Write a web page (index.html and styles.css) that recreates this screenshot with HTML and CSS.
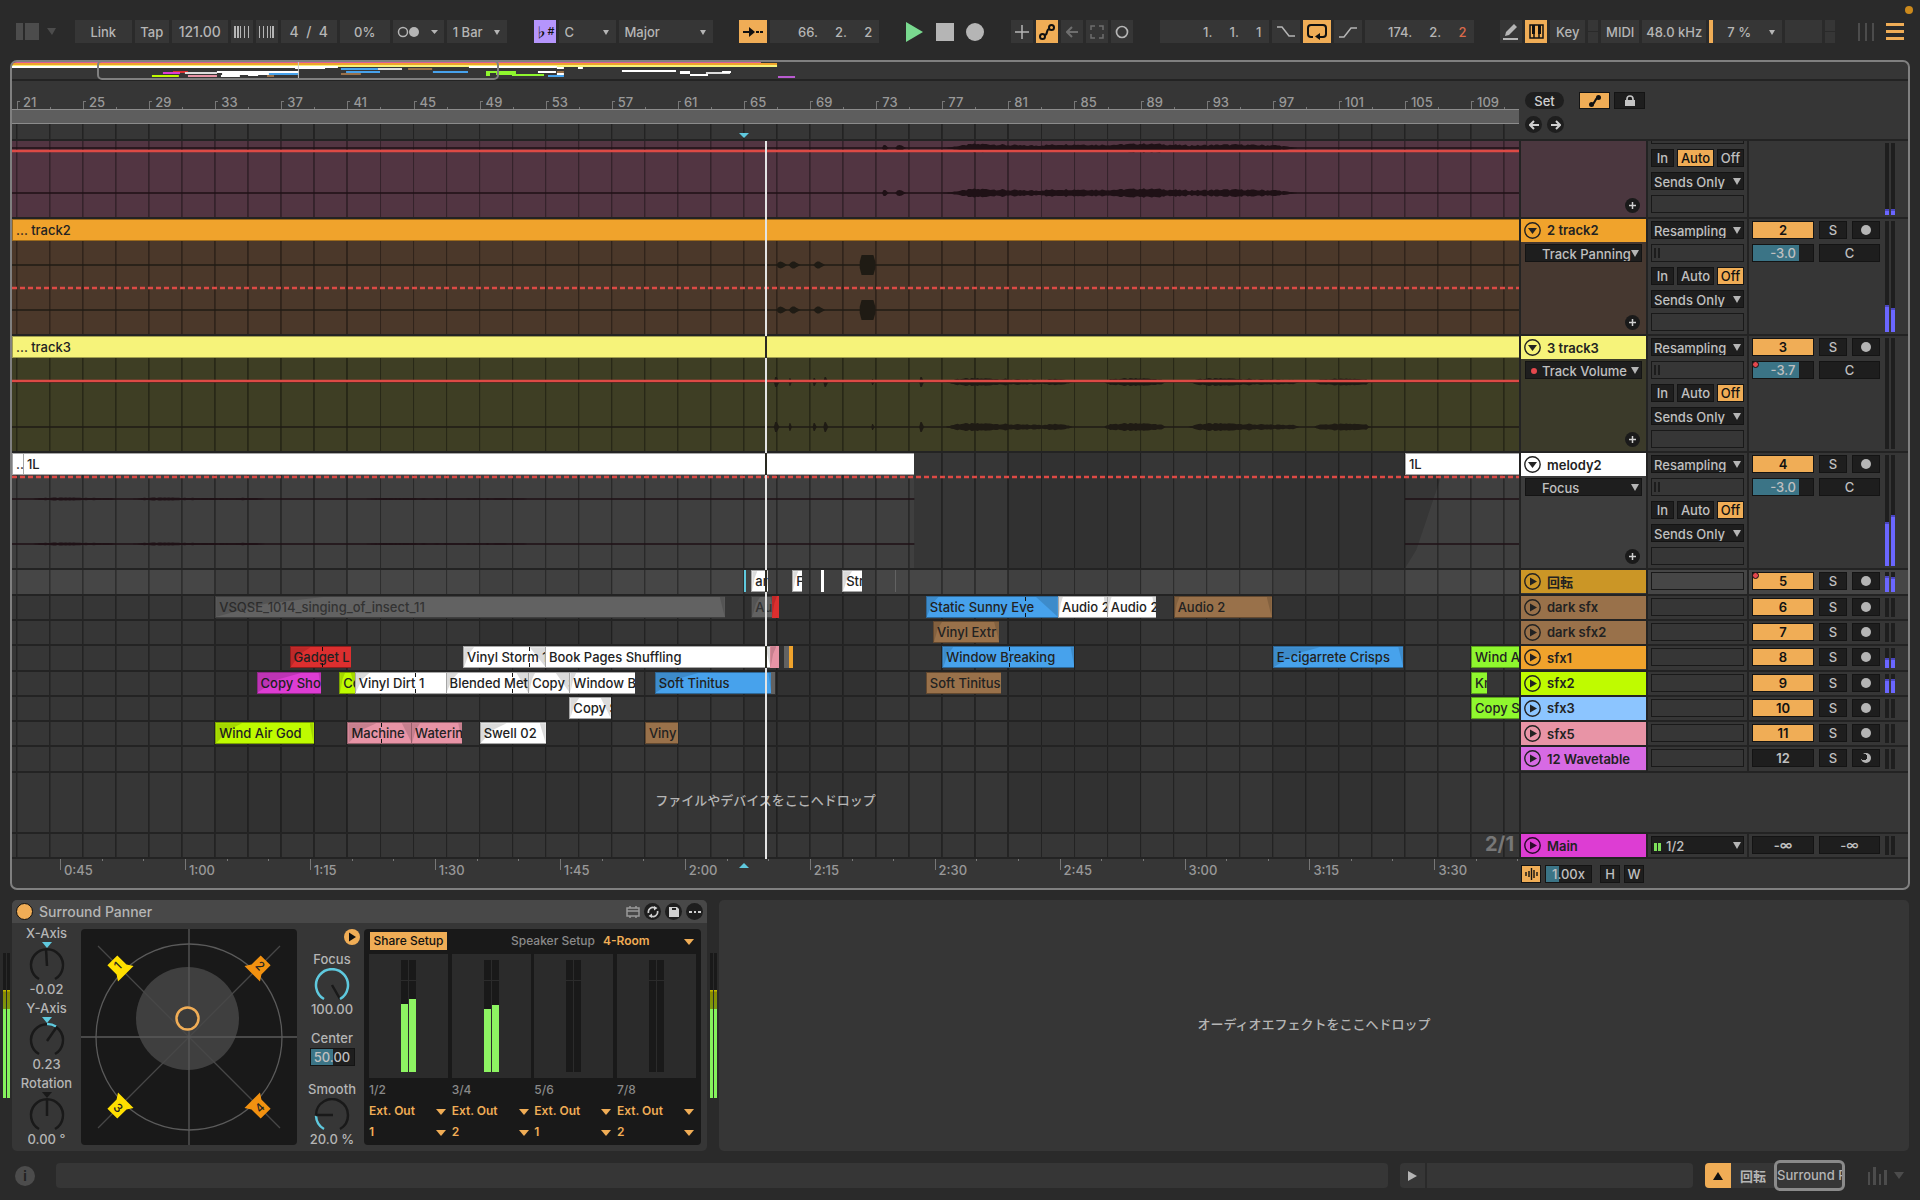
FILE: index.html
```html
<!DOCTYPE html>
<html lang="ja">
<head>
    <meta charset="UTF-8">
    <meta name="viewport" content="width=device-width, initial-scale=1.0">
    <title>Arrangement</title>
    <link rel="stylesheet" href="styles.css">
</head>
<body>
    <!-- Control bar -->
    <header class="toolbar">
        <div class="tool-group first">
            <button class="bare" aria-label="Browser">
                <svg width="40" height="20" viewBox="0 0 40 20"><path fill="#4c4c4c" d="M0 1h7v17H0zM9 1h14v17H9zM31 6h9l-4 7z"/></svg>
            </button>
        </div>
        <div class="tool-group">
            <button class="tool link">Link</button>
            <button class="tool tap">Tap</button>
            <input class="tool tempo" aria-label="Tempo" value="121.00">
            <button class="tool" aria-label="Nudge down"><svg width="16" height="12" viewBox="0 0 16 12"><path fill="#b5b5b5" d="M0 0h2v12H0zM3 0h2v12H3zM6 0h1v12H6zM10 0h1v12h-1zM14 0h1v12h-1z"/></svg></button>
            <button class="tool" aria-label="Nudge up"><svg width="16" height="12" viewBox="0 0 16 12"><path fill="#b5b5b5" d="M0 0h1v12H0zM4 0h1v12H4zM8 0h1v12H8zM11 0h1v12h-1zM13 0h2v12h-2z"/></svg></button>
            <input class="tool tempo" aria-label="Time signature" value="4  /  4">
            <input class="tool groove" aria-label="Groove amount" value="0%">
            <button class="tool metro" aria-label="Metronome"><svg width="42" height="12" viewBox="0 0 42 12"><circle cx="6" cy="6" r="4.5" fill="none" stroke="#b5b5b5" stroke-width="1.5"/><circle cx="17" cy="6" r="5" fill="#b5b5b5"/><path fill="#b5b5b5" d="M34 4h7l-3.500 4z"/></svg></button>
            <span class="select quant"><select aria-label="Quantization"><option>1 Bar</option></select></span>
        </div>
        <div class="tool-group">
            <button class="tool scale-on" aria-label="Scale mode"><b>♭</b><sup>#</sup></button>
            <span class="select root"><select aria-label="Root note"><option>C</option></select></span>
            <span class="select scale"><select aria-label="Scale"><option>Major</option></select></span>
        </div>
        <div class="tool-group">
            <button class="tool wide on" aria-label="Follow"><svg width="22" height="12" viewBox="0 0 22 12"><path fill="none" stroke="#111" stroke-width="2" d="M1 6h9M14 6h3M18 6h3"/><path fill="#111" d="M7 1l6 5-6 5z"/></svg></button>
            <input class="tool position" aria-label="Position" value="66.     2.     2">
        </div>
        <div class="tool-group transport">
            <button class="bare" aria-label="Play"><svg width="18" height="20" viewBox="0 0 18 20"><path fill="#79d98f" d="M0 0l17 10L0 20z"/></svg></button>
            <button class="bare" aria-label="Stop"><svg width="18" height="18" viewBox="0 0 18 18"><path fill="#b5b5b5" d="M0 0h18v18H0z"/></svg></button>
            <button class="bare" aria-label="Record"><svg width="18" height="18" viewBox="0 0 18 18"><circle cx="9" cy="9" r="9" fill="#b5b5b5"/></svg></button>
        </div>
        <div class="tool-group">
            <button class="tool" aria-label="Overdub"><svg width="14" height="14" viewBox="0 0 14 14"><path stroke="#b5b5b5" stroke-width="1.500" d="M7 0v14M0 7h14"/></svg></button>
            <button class="tool on" aria-label="Automation arm"><svg width="16" height="16" viewBox="0 0 16 16" fill="none" stroke="#111" stroke-width="2"><circle cx="3.500" cy="12.500" r="2.500"/><circle cx="12.500" cy="3.500" r="2.500"/><path d="M5.500 11c4 0 1-6 5-6"/></svg></button>
            <button class="tool" aria-label="Re-enable automation"><svg width="12" height="12" viewBox="0 0 12 12"><path fill="none" stroke="#6e6e6e" stroke-width="2" d="M12 6H2M6 1L1 6l5 5"/></svg></button>
            <button class="tool" aria-label="Capture"><svg width="14" height="14" viewBox="0 0 14 14"><path fill="none" stroke="#6e6e6e" stroke-width="1.500" d="M5 1H1v4M9 1h4v4M1 9v4h4M13 9v4H9"/></svg></button>
            <button class="tool" aria-label="Session record"><svg width="14" height="14" viewBox="0 0 14 14"><circle cx="7" cy="7" r="5.500" fill="none" stroke="#b5b5b5" stroke-width="1.700"/></svg></button>
        </div>
        <div class="tool-group">
            <input class="tool position" aria-label="Loop start" value="1.     1.     1">
            <button class="tool wide" aria-label="Punch in"><svg width="18" height="12" viewBox="0 0 18 12"><path fill="none" stroke="#b5b5b5" stroke-width="1.500" d="M0 1h5l7 9h6"/></svg></button>
            <button class="tool wide on" aria-label="Loop"><svg width="20" height="16" viewBox="0 0 20 16"><path fill="none" stroke="#111" stroke-width="2" d="M6 13H4q-3 0-3-3V4q0-3 3-3h12q3 0 3 3v6q0 3-3 3h-3"/><path fill="#111" d="M13 9v7l-5-3.500z"/></svg></button>
            <button class="tool wide" aria-label="Punch out"><svg width="18" height="12" viewBox="0 0 18 12"><path fill="none" stroke="#b5b5b5" stroke-width="1.500" d="M0 11h5l7-9h6"/></svg></button>
            <span class="tool position">174.     2.     <em>2</em></span>
        </div>
        <div class="tool-group">
            <button class="tool" aria-label="Draw mode"><svg width="16" height="16" viewBox="0 0 16 16"><path fill="#b5b5b5" d="M0 14h15v2H0zM2 12l1-4 8-8 3 3-8 8z"/></svg></button>
            <button class="tool on" aria-label="Computer keyboard"><svg width="15" height="15" viewBox="0 0 15 15"><path fill="none" stroke="#111" stroke-width="1.500" d="M1 1h13v13H1zM5 8v6M10 8v6"/><path fill="#111" d="M3 1h3v9H3zM9 1h3v9H9z"/></svg></button>
            <button class="tool key">Key</button>
            <span class="tool led"></span>
            <button class="tool midi">MIDI</button>
            <button class="tool rate">48.0 kHz</button>
            <span class="select cpu"><select aria-label="CPU"><option>7 %</option></select></span>
            <span class="tool disk"></span>
            <span class="tool led"></span>
        </div>
        <div class="tool-group views">
            <button class="bare" aria-label="Session view"><svg width="16" height="22" viewBox="0 0 16 22"><path fill="#4c4c4c" d="M0 2h2v18H0zM7 2h2v18H7zM14 2h2v18h-2z"/></svg></button>
            <button class="bare" aria-label="Arrangement view"><svg width="18" height="22" viewBox="0 0 18 22"><path fill="#f0ad56" d="M0 2h18v3H0zM0 9h18v3H0zM0 16h18v3H0z"/></svg></button>
        </div>
        <span class="notice"></span>
    </header>

    <main class="arrangement">
        <div class="overview">
            <svg id="overview" height="16"></svg>
            <span class="overview-view"></span>
        </div>

        <div class="timeline-head">
            <div class="rulers">
                <div class="bar-ruler" id="bar_ruler"></div>
                <div class="loop-bar"></div>
                <div class="scrub"></div>
            </div>
            <div class="locators">
                <button class="pill">Set</button>
                <button class="sq on" aria-label="Automation mode"><svg width="12" height="12" viewBox="0 0 12 12"><path stroke="#111" stroke-width="2" fill="none" d="M2 10c4 0 4-8 8-8"/><circle cx="2.500" cy="9.500" r="2.500" fill="#111"/><circle cx="9.500" cy="2.500" r="2.500" fill="#111"/></svg></button>
                <button class="sq" aria-label="Lock envelopes"><svg width="10" height="11" viewBox="0 0 10 11"><path fill="#c4c4c4" d="M0 5h10v6H0z"/><path fill="none" stroke="#c4c4c4" stroke-width="1.700" d="M2 6V4q0-3 3-3t3 3v2"/></svg></button>
                <div class="arrows">
                    <button class="round" aria-label="Previous locator"><svg width="10" height="10" viewBox="0 0 10 10"><path fill="none" stroke="#d0d0d0" stroke-width="2" d="M10 5H2M5 1L1 5l4 4"/></svg></button>
                    <button class="round" aria-label="Next locator"><svg width="10" height="10" viewBox="0 0 10 10"><path fill="none" stroke="#d0d0d0" stroke-width="2" d="M0 5h8M5 1l4 4-4 4"/></svg></button>
                </div>
            </div>
        </div>

        <div class="tracks">
            <div class="track-list" id="track_list"></div>
            <div class="track main-track">
                <div class="lane"><span class="grid-size">2/1</span></div>
                <div class="head">
                    <div class="title main-title"><button class="fold" aria-label="Unfold"><svg width="17" height="17" viewBox="0 0 17 17"><circle cx="8.500" cy="8.500" r="7.700" fill="none" stroke="#2b0a2a" stroke-width="1.400"/><path fill="#2b0a2a" d="M6 4.500l7 4-7 4z"/></svg></button>Main</div>
                </div>
                <div class="io"><span class="select drop out"><select aria-label="Main output"><option>1/2</option></select></span></div>
                <div class="mixer"><div class="mix-controls">
                    <button class="cell vol">-∞</button><button class="cell pan">-∞</button>
                </div><div class="meter"><i></i><i></i></div></div>
            </div>
            <div class="overlay" id="overlay"></div>
        </div>

        <div class="timeline-foot">
            <div class="time-ruler" id="time_ruler"></div>
            <div class="zoom-tools">
                <button class="sq mini on" aria-label="Overview waveform"><svg width="13" height="12" viewBox="0 0 13 12"><path stroke="#111" stroke-width="1.400" d="M1 4v4M4 3v6M6.500 0v12M9 2v8M12 4v4"/></svg></button>
                <input class="cell speed" aria-label="Speed" value="1.00x">
                <button class="cell hw">H</button>
                <button class="cell hw">W</button>
            </div>
        </div>
    </main>

    <!-- Device chain -->
    <section class="devices">
        <div class="chain-meter" id="chain_in"></div>
        <article class="device">
            <div class="device-title">
                <button class="power" aria-label="Device on"></button>
                <h2>Surround Panner</h2>
                <svg width="14" height="12" viewBox="0 0 14 12"><path fill="none" stroke="#999" stroke-width="1.500" d="M1 2h12v8H1zM1 5h12M4 0v2M10 0v2M4 10v2M10 10v2"/></svg>
                <button class="round" aria-label="Reload"><svg width="12" height="12" viewBox="0 0 12 12"><path fill="none" stroke="#d0d0d0" stroke-width="1.700" d="M1.500 7A4.500 4.500 0 0 1 8 2M10.500 5A4.500 4.500 0 0 1 4 10"/><path fill="#d0d0d0" d="M7 0l3.500 2L7 4.500zM5 7.500L1.500 10 5 12z"/></svg></button>
                <button class="round" aria-label="Save preset"><svg width="10" height="10" viewBox="0 0 10 10"><path fill="#d0d0d0" d="M0 0h8l2 2v8H0z"/><path fill="#222" d="M3 1h4v2H3z"/></svg></button>
                <button class="round" aria-label="More"><svg width="12" height="4" viewBox="0 0 12 4"><path fill="#d0d0d0" d="M0 1h3v2H0zM5 1h2v2H5zM9 1h3v2H9z"/></svg></button>
            </div>
            <div class="device-body">
                <div class="knobs">
                    <div class="knob"><span>X-Axis</span>
                        <svg width="40" height="40" viewBox="-20 -23 40 40"><path fill="#5fc9de" d="M-5-23H5L0-17z"/><path class="ring" d="M-8 14A16 16 0 1 1 8 14"/><path class="ring" d="M0 1L-1-16"/></svg>
                        <span>-0.02</span></div>
                    <div class="knob"><span>Y-Axis</span>
                        <svg width="40" height="40" viewBox="-20 -23 40 40"><path fill="#5fc9de" d="M-5-23H5L0-17z"/><path class="ring" d="M-8 14A16 16 0 1 1 8 14"/><path class="ring lit" d="M0-16A16 16 0 0 1 9-13.500"/><path class="ring" d="M0 1L9-12"/></svg>
                        <span>0.23</span></div>
                    <div class="knob"><span>Rotation</span>
                        <svg width="40" height="40" viewBox="-20 -23 40 40"><path fill="#191919" d="M-5-23H5L0-17z"/><path class="ring" d="M-8 14A16 16 0 1 1 8 14"/><path class="ring" d="M0 1V-16"/></svg>
                        <span>0.00 °</span></div>
                </div>
                <svg class="pan-field" width="216" height="216" viewBox="0 0 216 216">
                    <circle cx="106.500" cy="89.500" r="51.500" fill="#3f3f3f"/>
                    <g fill="none" stroke="#5a5a5a" stroke-width="1.300">
                        <path stroke="#474747" d="M17 17l182 182M199 17L17 199"/>
                        <path d="M108 0v216M0 108h216"/>
                        <circle cx="108" cy="108" r="93"/>
                    </g>
                    <circle cx="106.500" cy="89.500" r="11" fill="#3a3a3a" stroke="#f0ad56" stroke-width="2.500"/>
                    <g id="speakers"></g>
                </svg>
                <div class="focus-col">
                    <button class="play-dot" aria-label="Expand"><svg width="16" height="16" viewBox="0 0 16 16"><path fill="#111" d="M5 3.500l7 4.500-7 4.500z"/></svg></button>
                    <div class="knob"><span>Focus</span>
                        <svg width="40" height="34" viewBox="-20 -17 40 34"><path class="ring" d="M0 0L8 14"/><path class="ring lit" d="M-8 14A16 16 0 1 1 8 14"/></svg>
                        <span>100.00</span></div>
                    <label class="knob center">Center<input class="cell" value="50.00"></label>
                    <div class="knob"><span>Smooth</span>
                        <svg width="40" height="34" viewBox="-20 -17 40 34"><path class="ring" d="M-16 0A16 16 0 1 1 8 14"/><path class="ring lit" d="M-8 14A16 16 0 0 1-16 1"/><path class="ring" d="M1 0H-16"/></svg>
                        <span>20.0 %</span></div>
                </div>
                <div class="setup">
                    <div class="setup-top">
                        <button class="share">Share Setup</button>
                        <label for="speaker_setup">Speaker Setup</label>
                        <span class="select amber room"><select id="speaker_setup"><option>4-Room</option></select></span>
                    </div>
                    <div class="outs" id="outs"></div>
                </div>
            </div>
        </article>
        <div class="chain-meter" id="chain_out"></div>
        <div class="device-drop">オーディオエフェクトをここへドロップ</div>
    </section>

    <footer class="status">
        <button class="info" aria-label="Info">i</button>
        <div class="status-text"></div>
        <div class="preview"><button aria-label="Preview"><svg width="9" height="10" viewBox="0 0 9 10"><path fill="#b5b5b5" d="M0 0l9 5-9 5z"/></svg></button><span></span></div>
        <div class="device-tab">
            <button class="tab-toggle" aria-label="Toggle device view"><svg width="10" height="8" viewBox="0 0 10 8"><path fill="#111" d="M5 0l5 8H0z"/></svg></button>
            <span class="tab-name">回転</span>
            <span class="tab-device">Surround Panner</span>
        </div>
        <svg width="36" height="18" viewBox="0 0 36 18"><path fill="#4c4c4c" d="M0 5h2v13H0zM5 0h3v18H5zM11 7h2v11h-2zM16 3h3v15h-3zM26 5h10l-5 7z"/></svg>
    </footer>

    <script src="script.js"></script>
</body>
</html>
```

FILE: styles.css
```css
:root {
    --bg: #2a2a2a;
    --panel: #363636;
    --line: #232323;
    --dark: #1e1e1e;
    --text: #b5b5b5;
    --amber: #f0ad56;
    --side: 389px;
}

*,
*::before,
*::after {
    box-sizing: border-box;
}

body {
    margin: 0;
    height: 100vh;
    display: flex;
    flex-direction: column;
    overflow: hidden;
    background: var(--bg);
    color: var(--text);
    font: 500 13px/18px Inter, "Noto Sans CJK JP", sans-serif;
}

button,
input,
select {
    font: inherit;
    color: inherit;
    margin: 0;
    padding: 0;
    border: 0;
    border-radius: 0;
    background: none;
    text-align: center;
}

svg {
    display: block;
    flex: none;
}

/* drop-downs */
.select {
    position: relative;
    display: block;
    background: var(--panel);
}

.select select {
    appearance: none;
    width: 100%;
    height: 100%;
    padding: 0 14px 0 6px;
    text-align: left;
}

.select::after {
    content: "";
    position: absolute;
    right: 7px;
    top: 50%;
    margin-top: -2px;
    border: 3px solid transparent;
    border-top: 5px solid var(--text);
    border-bottom: 0;
    pointer-events: none;
}

/* control bar */
.toolbar {
    position: relative;
    flex: none;
    display: flex;
    justify-content: space-between;
    padding: 20px 16px 17px;
}

.tool-group {
    display: flex;
    align-items: center;
    gap: 3px;
    height: 23px;
}

.first {
    margin-right: -8px;
}

.bare {
    display: block;
}

.tool,
.tool-group .select {
    display: flex;
    align-items: center;
    justify-content: center;
    width: 22px;
    height: 23px;
    background: var(--panel);
    overflow: hidden;
}

.tool-group .link { width: 57px; }
.tool-group .tap { width: 34px; }
.tool-group .tempo { width: 56px; font-size: 14px; }
.tool-group .groove { width: 50px; }
.tool-group .metro { width: 51px; }
.tool-group .quant { width: 60px; }
.tool-group .root { width: 57px; }
.tool-group .scale { width: 94px; }
.tool-group .wide { width: 28px; }
.tool-group .position { width: 109px; text-align: right; justify-content: flex-end; padding-right: 7px; white-space: pre; }
.tool-group .key { width: 35px; }
.tool-group .led { width: 10px; background: linear-gradient(var(--panel) 11px, var(--bg) 11px, var(--bg) 12px, var(--panel) 12px); }
.tool-group .midi { width: 38px; }
.tool-group .rate { width: 64px; }
.tool-group .cpu { width: 73px; border-left: 4px solid var(--amber); }
.tool-group .cpu select { padding-left: 14px; }
.tool-group .disk { width: 37px; }

.tool.on,
.sq.on {
    background: var(--amber);
    color: #111;
}

.tool.scale-on {
    background: #b595fc;
    color: #111;
    line-height: 12px;
}

.position em {
    font-style: normal;
    color: #d9694a;
}

.transport,
.views {
    gap: 12px;
}

.views {
    margin-left: -4px;
}

.notice {
    position: absolute;
    right: 7px;
    top: 6px;
    width: 8px;
    height: 8px;
    border-radius: 50%;
    background: #cc8a1c;
}

/* arrangement window */
.arrangement {
    flex: 1;
    min-height: 0;
    margin: 0 10px 10px;
    display: flex;
    flex-direction: column;
    border: 2px solid #808080;
    border-radius: 7px;
    background: var(--panel);
    overflow: hidden;
}

.overview {
    position: relative;
    flex: none;
    height: 19px;
    border-bottom: 2px solid var(--line);
}

.overview svg {
    width: 100%;
}

.overview-view {
    position: absolute;
    left: 4.5%;
    width: 21.2%;
    top: -2px;
    height: 20px;
    border: 2px solid #808080;
    border-radius: 5px;
}

.timeline-head {
    flex: none;
    display: flex;
    height: 60px;
    border-bottom: 2px solid var(--line);
}

.rulers {
    flex: 1;
    min-width: 0;
    overflow: hidden;
}

.bar-ruler {
    display: flex;
    height: 28px;
}

.bar-ruler i {
    flex: none;
}

.bar-ruler span {
    position: relative;
    flex: none;
    padding: 12px 0 0 6px;
    color: #999;
    white-space: nowrap;
}

.bar-ruler span::before {
    content: "";
    position: absolute;
    left: 0;
    bottom: 0;
    width: 3px;
    height: 8px;
    border: solid #777;
    border-width: 1px 0 0 1px;
}

.bar-ruler span::after {
    content: "";
    position: absolute;
    left: 50%;
    bottom: 0;
    width: 1px;
    height: 2px;
    background: #777;
}

.loop-bar {
    height: 15px;
    background: #5e5e5e;
    border: solid #8c8c8c;
    border-width: 1px 0;
}

.scrub {
    height: 15px;
}

.scrub,
.lane::before {
    background-image: repeating-linear-gradient(to right, rgba(0, 0, 0, .35) 0, rgba(0, 0, 0, .35) 1px, transparent 2px, transparent 2.193%);
    background-position: 4px 0;
}

.locators {
    flex: none;
    width: var(--side);
    display: flex;
    flex-wrap: wrap;
    align-content: flex-start;
    padding: 11px 0 0 6px;
}

.pill {
    width: 39px;
    height: 17px;
    border-radius: 9px;
    background: var(--dark);
    color: #d0d0d0;
    margin-right: 15px;
}

.sq {
    display: flex;
    align-items: center;
    justify-content: center;
    width: 31px;
    height: 17px;
    margin-right: 4px;
    background: var(--dark);
    border: 1px solid #141414;
}

.arrows {
    flex: 0 0 100%;
    display: flex;
    gap: 5px;
    padding-top: 7px;
}

.round {
    display: flex;
    align-items: center;
    justify-content: center;
    width: 17px;
    height: 17px;
    border-radius: 50%;
    background: var(--dark);
}

/* tracks */
.tracks {
    position: relative;
    flex: 1;
    min-height: 0;
    display: flex;
    flex-direction: column;
}

.track-list {
    flex: 1;
    min-height: 0;
    display: flex;
    flex-direction: column;
}

.track {
    flex: 70 0 0;
    min-height: 0;
    display: grid;
    grid-template-columns: minmax(0, 1fr) 125px 99px 159px;
    grid-template-rows: minmax(0, 1fr);
    column-gap: 2px;
    padding-bottom: 2px;
    background: var(--line);
    overflow: hidden;
}

.track.tall { flex-grow: 346; }
.track.cut-off { flex-grow: 228; }
.track.empty { flex-grow: 178; }

.track.main-track {
    flex: none;
    height: 25px;
}

.track.empty .side {
    grid-column: 2 / 5;
    background: var(--panel);
}

.lane {
    position: relative;
    overflow: hidden;
    background: var(--panel);
}

/* every other eight bars is a shade darker */
.shade {
    position: absolute;
    top: 0;
    bottom: 0;
    background: rgba(0, 0, 0, .08);
}

.lane::before {
    content: "";
    position: absolute;
    inset: 0;
    z-index: 1;
}

.selected .lane,
.selected .io,
.selected .mixer {
    background: #464646;
}

.clip {
    position: absolute;
    z-index: 2;
    top: 0;
    height: 22px;
    padding: 1px 0 0 3px;
    border: 1px solid rgba(0, 0, 0, .35);
    border-right: 0;
    overflow: hidden;
    white-space: nowrap;
    color: #222;
}

.clip.thin {
    padding: 0;
    border: 0;
}

.clip::before,
.clip::after {
    content: "";
    position: absolute;
    top: 0;
    bottom: 0;
    background: rgba(0, 0, 0, .14);
}

.clip::before {
    left: 0;
    width: var(--in, 0);
    clip-path: polygon(0 0, 100% 0, 45% 35%, 0 100%);
}

.clip::after {
    right: 0;
    width: var(--out, 0);
    clip-path: polygon(0 0, 100% 0, 100% 100%);
}

.clip .warp {
    position: absolute;
    top: 0;
    bottom: 0;
    width: 1px;
    background: linear-gradient(#111 4px, transparent 4px, transparent 16px, #111 16px);
}

.white { background: #fff; }
.red { background: #dc2f2f; }
.magenta { background: #dd3dd3; }
.lime { background: #bffb00; }
.green { background: #8ff72e; }
.blue { background: #47a2ec; }
.brown { background: #99714a; }
.pink { background: #e894a6; }
.orange { background: #f0a32c; }
.yellow { background: #f6f37a; }
.gold { background: #cb9626; }
.sky { background: #8cc5ff; }
.violet { background: #d76ae4; }
.cyan { background: #5fc9de; }
.grey { background: #626262; color: #333; }

.body {
    position: absolute;
    top: 22px;
    bottom: 0;
}

.cut-off .body { top: 0; }
.body.plum { background: #523542; }
.body.umber { background: #4b382a; }
.body.olive { background: #3e3e24; }
.body.ash { background: #3f3f3f; }
.body.ash.fading { clip-path: polygon(0 100%, 10% 80%, 32% 0, 100% 0, 100% 100%); }

.wave {
    position: absolute;
    z-index: 1;
    left: 0;
    bottom: 0;
    width: 100%;
    height: 93px;
}

.playhead {
    position: absolute;
    top: 0;
    bottom: 0;
    width: 2px;
    margin-left: -1px;
    background: #e4e4e4;
}

.playhead.over {
    z-index: 6;
    height: 22px;
    background: #2a2a22;
}

.overlay {
    position: absolute;
    z-index: 5;
    top: 0;
    bottom: 0;
    left: 0;
    right: 389px;
    pointer-events: none;
}

.insert-mark {
    position: absolute;
    margin-left: -5px;
    border: 5px solid transparent;
}

.insert-mark.top { top: -8px; border-top-color: #5fc9de; border-bottom: 0; }
.insert-mark.bottom { bottom: -9px; border-bottom-color: #5fc9de; border-top: 0; }

.drop-hint {
    position: absolute;
    inset: 0;
    display: flex;
    align-items: center;
    justify-content: center;
    z-index: 2;
    padding-bottom: 4px;
}

.grid-size {
    position: absolute;
    right: 5px;
    top: 1px;
    z-index: 2;
    color: #777;
    font-size: 20px;
    font-weight: 700;
}

.head {
    display: flex;
    flex-direction: column;
    position: relative;
    background: var(--panel);
}

.head.plum { background: #4b373f; }
.head.umber { background: #463830; }
.head.olive { background: #3b3a2a; }
.head.ash { background: #3d3d3d; }

.title {
    flex: none;
    display: flex;
    align-items: center;
    gap: 6px;
    height: 23px;
    padding-left: 3px;
    color: #222;
    font-weight: 600;
}

.main-title { background: #dd3dd3; }

.fold {
    width: 17px;
    height: 17px;
}

.drop {
    height: 18px;
    background: var(--dark);
    border: 1px solid #141414;
    color: #c0c0c0;
}

.drop select {
    padding: 0 10px 0 2px;
}

.drop::after {
    right: 2px;
    margin-top: -3px;
    border-width: 4px;
    border-top-width: 7px;
}

.head .drop {
    margin: 2px 4px 0;
}

.head .drop select {
    padding-left: 16px;
}

.armed {
    position: absolute;
    z-index: 1;
    left: 5px;
    top: 6px;
    width: 6px;
    height: 6px;
    border-radius: 50%;
    background: #e5484d;
}

.plus {
    position: absolute;
    right: 6px;
    bottom: 4px;
    width: 15px;
    height: 15px;
}

.io,
.mixer {
    background: var(--panel);
    min-height: 0;
}

.io {
    display: flex;
    flex-direction: column;
    gap: 5px;
    padding: 2px 3px;
}

.io > * {
    flex: none;
}

.cut-off .io {
    justify-content: flex-end;
    padding-bottom: 4px;
}

.slot {
    height: 18px;
    border: 1px solid #191919;
}

.slot.sig {
    padding: 3px 2px;
}

.slot.sig::before {
    content: "";
    display: block;
    width: 6px;
    height: 10px;
    border: solid #1c1c1c;
    border-width: 0 2px;
}

.monitor {
    display: grid;
    grid-template-columns: 23px 37px 27px;
    justify-content: space-between;
}

.cell {
    height: 18px;
    min-width: 0;
    line-height: 16px;
    background: var(--dark);
    border: 1px solid #141414;
    color: #c0c0c0;
    overflow: hidden;
}

.cell.on {
    background: var(--amber);
    color: #111;
}

.out select {
    padding-left: 14px;
}

.out::before {
    content: "";
    position: absolute;
    left: 2px;
    bottom: 2px;
    width: 7px;
    height: 8px;
    border: solid #7de05a;
    border-width: 0 3px;
}

.mixer {
    display: flex;
    gap: 5px;
    padding: 2px 0 2px 3px;
}

.mix-controls {
    display: grid;
    grid-template-columns: 62px 28px 28px;
    grid-auto-rows: 18px;
    gap: 5px;
    align-content: start;
    position: relative;
}

.cell.vol { font-weight: 600; }
.cell.pan { grid-column: 2 / 4; }

.level {
    background: linear-gradient(to right, #3b7486 76%, var(--dark) 76%);
}

.rec::before {
    content: "";
    display: block;
    width: 10px;
    height: 10px;
    margin: auto;
    border-radius: 50%;
    background: var(--text);
}

.rec.half::before {
    background: radial-gradient(circle at 30% 40%, var(--dark) 3px, var(--text) 3px);
}

.auto-dot {
    position: absolute;
    left: 0;
    top: 0;
    width: 7px;
    height: 7px;
    border: 1px solid #111;
    border-radius: 50%;
    background: #e5484d;
}

.auto-dot.second { top: 23px; }

.meter {
    display: flex;
    gap: 2px;
}

.meter i {
    display: flex;
    align-items: flex-end;
    width: 4px;
    background: var(--dark);
}

.meter b {
    width: 100%;
    background: #6a66ff;
    border-top: 2px solid #4a46c0;
}

/* lower ruler */
.timeline-foot {
    flex: none;
    display: flex;
    height: 29px;
}

.time-ruler {
    position: relative;
    flex: 1;
    min-width: 0;
    display: flex;
    overflow: hidden;
}

.time-ruler i {
    flex: none;
}

.time-ruler span {
    flex: none;
    position: relative;
    height: 11px;
    padding: 2px 0 0 3px;
    border-left: 1px solid #777;
    color: #999;
}

.time-ruler span::after {
    content: "";
    position: absolute;
    left: 33%;
    top: 0;
    width: 34%;
    height: 2px;
    border: solid #777;
    border-width: 0 1px;
}

.zoom-tools {
    flex: none;
    width: var(--side);
    display: flex;
    align-items: flex-start;
    padding: 6px 0 0 2px;
}

.sq.mini {
    width: 20px;
    height: 18px;
}

.speed {
    width: 47px;
    margin-right: 8px;
    background: linear-gradient(to right, #3b7486 30%, var(--dark) 30%);
}

.hw {
    width: 20px;
    margin-right: 4px;
}

/* device view */
.devices {
    flex: none;
    display: flex;
    height: 251px;
    margin-right: 11px;
}

.chain-meter {
    display: flex;
    justify-content: center;
    gap: 1px;
    width: 12px;
    padding: 53px 0;
}

.chain-meter i {
    width: 3px;
    background: linear-gradient(#191919 0 37px, #c0b800 37px 38px, #8a8a00 39px, #7a9a10 56px, #85f25c 56px);
}

.device {
    width: 695px;
    border-radius: 5px;
    background: var(--panel);
    overflow: hidden;
}

.device-title {
    display: flex;
    align-items: center;
    gap: 4px;
    height: 23px;
    padding: 0 4px;
    background: #484848;
}

.device-title h2 {
    flex: 1;
    margin: 0 0 0 2px;
    font-size: 14px;
    font-weight: 500;
}

.power {
    width: 17px;
    height: 17px;
    border: 1px solid #111;
    border-radius: 50%;
    background: var(--amber);
}

.device-body {
    display: flex;
    padding: 6px 6px 0 0;
}

.knobs {
    width: 69px;
    margin-top: -5px;
}

.knob {
    display: flex;
    flex-direction: column;
    align-items: center;
}

.knobs .knob {
    height: 75px;
}

.ring {
    fill: none;
    stroke: #191919;
    stroke-width: 2.5;
}

.ring.lit {
    stroke: #5fc9de;
}

.knobs svg,
.focus-col .knob svg {
    margin: 0 0 -2px;
}

.pan-field {
    border-radius: 4px;
    background: #191919;
}

.pan-field text {
    fill: #222;
    font-size: 12px;
    text-anchor: middle;
}

.focus-col {
    width: 67px;
    display: flex;
    flex-direction: column;
    padding: 0 0 0 3px;
}

.play-dot {
    align-self: flex-end;
    width: 16px;
    height: 16px;
    margin-right: 4px;
    border-radius: 50%;
    background: var(--amber);
}

.focus-col .knob {
    padding-top: 5px;
}

.center {
    gap: 1px;
    margin: 6px 0 9px;
}

.center .cell {
    width: 45px;
    background: linear-gradient(to right, #3b7486 50%, var(--dark) 50%);
}

.setup {
    flex: 1;
    padding: 3px 5px 0;
    border-radius: 4px;
    background: #191919;
    height: 216px;
    font-size: 12px;
}

.setup-top {
    display: flex;
    align-items: center;
    height: 18px;
    margin-bottom: 4px;
}

.share {
    width: 77px;
    height: 18px;
    margin: 0 auto 0 1px;
    background: var(--amber);
    color: #111;
}

.setup-top label {
    color: #8a8a8a;
    margin-right: 8px;
}

.amber {
    height: 18px;
    background: none;
    color: var(--amber);
    font-weight: 600;
}

.amber select {
    padding: 0 12px 0 0;
}

.amber::after {
    right: 2px;
    border-width: 5px;
    border-top: 6px solid var(--amber);
    border-bottom: 0;
}

.room {
    width: 93px;
}

.outs {
    display: grid;
    grid-template-columns: repeat(4, 79px);
    justify-content: space-between;
    color: #8a8a8a;
}

.out-meter {
    display: flex;
    justify-content: center;
    gap: 1px;
    height: 124px;
    margin-bottom: 3px;
    padding: 6px 0;
    background: #2b2b2b;
}

.out-meter i {
    display: flex;
    align-items: flex-end;
    width: 7px;
    background: linear-gradient(#191919 20px, #2b2b2b 20px, #2b2b2b 21px, #191919 21px);
}

.out-meter b {
    width: 100%;
    background: #8df562;
}

.outs .amber {
    margin-top: 3px;
}

.device-drop {
    flex: 1;
    display: flex;
    align-items: center;
    justify-content: center;
    padding-bottom: 4px;
    border-radius: 5px;
    background: var(--panel);
}

/* status bar */
.status {
    flex: none;
    display: flex;
    align-items: center;
    height: 25px;
    margin: 12px 16px 12px 15px;
}

.info {
    width: 20px;
    height: 20px;
    border-radius: 50%;
    background: #4c4c4c;
    color: #222;
    font-weight: 700;
}

.status-text {
    flex: 1;
    height: 25px;
    margin: 0 12px 0 21px;
    border-radius: 4px;
    background: var(--panel);
}

.preview {
    display: flex;
    gap: 2px;
    height: 25px;
    border-radius: 4px;
    overflow: hidden;
}

.preview button {
    display: flex;
    align-items: center;
    justify-content: center;
    width: 25px;
    background: var(--panel);
}

.preview span {
    width: 266px;
    background: var(--panel);
}

.device-tab {
    display: flex;
    align-items: center;
    height: 25px;
    margin: 0 23px 0 12px;
    background: var(--panel);
    border-radius: 4px;
}

.tab-toggle {
    display: flex;
    align-items: center;
    justify-content: center;
    width: 26px;
    height: 25px;
    border-radius: 4px 0 0 4px;
    background: var(--amber);
}

.tab-name {
    width: 43px;
    padding-left: 9px;
    font-weight: 700;
}

.tab-device {
    width: 71px;
    height: 31px;
    border: 3px solid #8a8a8a;
    border-radius: 6px;
    line-height: 25px;
    overflow: hidden;
    white-space: nowrap;
}
```

FILE: script.js
```javascript
// Visible part of the arrangement, in bars
var viewStart = 20.7;
var viewLength = 91.2;
var playhead = 66.33;
var insertMark = 65;

function pct(bars) {
    return (bars / viewLength * 100).toFixed(3) + '%';
}

function at(bar) {
    return pct(bar - viewStart);
}

// clip: [start bar, length, colour, name, fade in px, fade out px, warp marker px]
var tracks = [
    { type: 'cut-off', tint: 'plum', monitor: 'Auto', meter: [8, 8],
      wave: [[73.35, 73.75, 3], [74.15, 74.8, 3], [77, 98.5, 4.5]], lines: [24, 69], redLine: 'solid', redY: 27 },
    { type: 'tall', tint: 'umber', color: 'orange', name: '2 track2', param: 'Track Panning', no: 2, vol: '-3.0', monitor: 'Off', meter: [24, 22],
      clips: [[20.7, 92, 'orange', '... track2']],
      wave: [[66.95, 67.6, 3.5], [67.7, 68.4, 3.5], [69.2, 69.9, 3.5], [72, 72.95, 10]], lines: [24, 69], redLine: 'dashed', redY: 47 },
    { type: 'tall', tint: 'olive', color: 'yellow', name: '3 track3', param: 'Track Volume', armed: true, no: 3, vol: '-3.7', monitor: 'Off', meter: [0, 0], over: true,
      clips: [[20.7, 92, 'yellow', '... track3']],
      wave: [[66.8, 67.15, 5], [67.7, 67.9, 4], [69.15, 69.4, 4], [69.8, 70.1, 5], [72.7, 72.9, 3], [75.6, 75.9, 5], [77.2, 84.9, 4], [86.8, 90.5, 4], [91.9, 98.6, 4], [99.5, 102.9, 3.5]],
      lines: [24, 69], redLine: 'solid', redY: 23 },
    { type: 'tall', tint: 'ash', color: 'white', name: 'melody2', param: 'Focus', no: 4, vol: '-3.0', monitor: 'Off', meter: [40, 46], over: true,
      clips: [[20.7, 0.66, 'white', '..'], [21.36, 53.95, 'white', '1L'], [105, 8, 'white', '1L']],
      wave: [[22, 27, 1.5], [28, 36, 1.5], [42, 52, 1]], lines: [24, 69], spans: [[20.7, 75.31], [105, 112]], redLine: 'dashed', redY: 2 },
    { type: 'selected', color: 'gold', name: '回転', no: 5, dot: true, meter: [80, 78], over: true,
      clips: [[65, 0.1, 'cyan', ''], [65.44, 1.03, 'white', 'ar', 5, 3], [67.92, 0.6, 'white', 'F', 5, 0], [69.67, 0.15, 'white', ''], [70.94, 1.2, 'white', 'Str', 9, 0], [74.14, 0.08, 'grey', '']] },
    { type: '', color: 'brown', name: 'dark sfx', no: 6, meter: [0, 0],
      clips: [[33, 30.83, 'grey', 'VSQSE_1014_singing_of_insect_11', 110, 5], [65.44, 1.45, 'grey', 'Au', 8, 5], [66.7, 0.42, 'red', '', 5, 0],
          [76, 7.98, 'blue', 'Static Sunny Eve', 12, 22, 98], [84, 3, 'white', 'Audio 2', 4, 4], [86.95, 3, 'white', 'Audio 2', 4, 4], [91, 5.93, 'brown', 'Audio 2', 5, 5]] },
    { type: '', color: 'brown', name: 'dark sfx2', no: 7, meter: [0, 0],
      clips: [[76.44, 4, 'brown', 'Vinyl Extr', 8, 5]] },
    { type: '', color: 'orange', name: 'sfx1', no: 8, meter: [50, 50], over: true,
      clips: [[37.5, 3.7, 'red', 'Gadget L', 20, 0, 31], [48, 5, 'white', 'Vinyl Storm 1', 10, 16, 65], [52.95, 13.65, 'white', 'Book Pages Shuffling', 0, 5],
          [66.6, 0.5, 'pink', '', 6, 0], [67.4, 0.34, 'grey', ''], [67.74, 0.25, 'orange', ''], [77, 8, 'blue', 'Window Breaking', 10, 4, 66],
          [97, 7.9, 'blue', 'E-cigarrete Crisps', 46, 5], [109, 4, 'green', 'Wind Air']] },
    { type: '', color: 'lime', name: 'sfx2', no: 9, meter: [70, 70],
      clips: [[35.5, 3.93, 'magenta', 'Copy Sho', 45, 3], [40.5, 1, 'lime', 'Copy', 5, 5], [41.44, 5.5, 'white', 'Vinyl Dirt 1', 14, 0, 59], [46.94, 5, 'white', 'Blended Metal', 12, 12, 65],
          [51.94, 2.5, 'white', 'Copy Sh', 6, 14], [54.43, 4, 'white', 'Window Br', 6, 0], [59.6, 7.05, 'blue', 'Soft Tinitus', 44, 3], [66.65, 0.25, 'grey', ''],
          [76, 4.57, 'brown', 'Soft Tinitus'], [109, 0.95, 'green', 'Kn']] },
    { type: '', color: 'sky', name: 'sfx3', no: 10, meter: [0, 0],
      clips: [[54.43, 2.5, 'white', 'Copy Sh', 9, 10], [109, 4, 'green', 'Copy Sh']] },
    { type: '', color: 'pink', name: 'sfx5', no: 11, meter: [0, 0],
      clips: [[33, 5.95, 'lime', 'Wind Air God', 26, 4], [41, 3.9, 'pink', 'Machine', 28, 10, 33], [44.85, 3.1, 'pink', 'Watering', 8, 4], [49, 4, 'white', 'Swell 02', 26, 6], [59, 2, 'brown', 'Viny']] },
    { type: '', color: 'violet', name: '12 Wavetable', no: 12, off: true, meter: [0, 0], clips: [] }
];

function clipHtml(c) {
    var style = 'left:' + at(c[0]) + ';width:' + pct(c[1]) + ';--in:' + (c[4] || 0) + 'px;--out:' + (c[5] || 0) + 'px';
    var warp = c[6] ? '<i class="warp" style="left:' + c[6] + 'px"></i>' : '';
    return '<div class="clip ' + c[2] + (c[3] ? '' : ' thin') + '" style="' + style + '">' + c[3] + warp + '</div>';
}

function noise(i) {
    var v = Math.sin(i * 12.9898) * 43758.5453;
    return v - Math.floor(v);
}

// Outline of the audio, mirrored round the centre line of each channel
function waveSvg(t) {
    var unit = 1507 / viewLength;
    var out = '';
    var ink = t.tint === 'plum' || t.tint === 'ash' ? '#1f1116' : '#1f1b14';
    var spans = t.spans || [[viewStart, viewStart + viewLength]];
    t.lines.forEach(function (y) {
        spans.forEach(function (s) {
            out += '<path stroke="' + ink + '" stroke-width="1.5" d="M' + ((s[0] - viewStart) * unit) + ' ' + y + 'H' + ((s[1] - viewStart) * unit) + '"/>';
        });
        t.wave.forEach(function (w) {
            var x0 = (w[0] - viewStart) * unit, x1 = (w[1] - viewStart) * unit, n = Math.max(4, Math.round((x1 - x0) / 2));
            var long = x1 - x0 > 30;
            var up = '', down = '';
            for (var i = 0; i <= n; i++) {
                var p = i / n, edge, h;
                if (w[2] > 9) {
                    edge = p === 0 || p === 1 ? 0.3 : 1;
                } else {
                    edge = Math.min(1, p * (long ? 12 : 4), (1 - p) * (long ? 14 : 2));
                }
                h = w[2] * edge * (long ? 0.55 + 0.2 * Math.sin(i * 0.11) * Math.sin(i * 0.043) + 0.35 * noise(i) : 1);
                var x = (x0 + (x1 - x0) * p).toFixed(1);
                up += 'L' + x + ' ' + (y - h).toFixed(1);
                down = 'L' + x + ' ' + (y + h).toFixed(1) + down;
            }
            out += '<path fill="' + ink + '" d="M' + x0.toFixed(1) + ' ' + y + up + down + 'Z"/>';
        });
    });
    out += '<path stroke="#dd4a45" stroke-width="2.500"' + (t.redLine === 'dashed' ? ' stroke-dasharray="5 3"' : '') + ' d="M0 ' + t.redY + 'H1507"/>';
    return '<svg class="wave" viewBox="0 0 1507 93" preserveAspectRatio="none">' + out + '</svg>';
}

function laneHtml(t) {
    var html = '';
    for (var b = 33; b < 112; b += 16) {
        html += '<i class="shade" style="left:' + at(b) + ';width:' + pct(8) + '"></i>';
    }
    if (t.tint === 'ash') {
        html += '<div class="body ash" style="left:0;width:' + at(75.31) + '"></div><div class="body ash fading" style="left:' + at(105) + ';right:0"></div>';
    } else if (t.tint) {
        html += '<div class="body ' + t.tint + '" style="left:0;right:0"></div>';
    }
    if (t.wave) html += waveSvg(t);
    html += (t.clips || []).map(clipHtml).join('');
    if (t.over) html += '<i class="playhead over" style="left:' + at(playhead) + '"></i>';
    return html;
}

function foldIcon(open) {
    var d = open ? 'M4 6h9l-4.500 6z' : 'M6 4.500l7 4-7 4z';
    return '<svg width="17" height="17" viewBox="0 0 17 17"><circle cx="8.500" cy="8.500" r="7.700" fill="none" stroke="#222" stroke-width="1.400"/><path fill="#222" d="' + d + '"/></svg>';
}

function dropDown(label, value) {
    return '<span class="select drop"><select aria-label="' + label + '"><option>' + value + '</option></select></span>';
}

function trackHtml(t) {
    var open = t.type === 'tall' || t.type === 'cut-off';
    var head = '', io = '', mix = '';
    if (t.name) {
        head += '<div class="title ' + t.color + '"><button class="fold" aria-label="Fold">' + foldIcon(open) + '</button>' + t.name + '</div>';
    }
    if (t.param) {
        head += dropDown('Automation', t.param).replace('<select', (t.armed ? '<i class="armed"></i>' : '') + '<select');
    }
    if (open) {
        head += '<button class="plus" aria-label="Add lane"><svg width="15" height="15" viewBox="0 0 15 15"><circle cx="7.500" cy="7.500" r="7.500" fill="#1a1a1a"/><path stroke="#d0d0d0" stroke-width="1.500" d="M7.500 4v7M4 7.500h7"/></svg></button>';
        io += dropDown('Input', 'Resampling') + '<div class="slot sig"></div><div class="monitor">';
        ['In', 'Auto', 'Off'].forEach(function (m) {
            io += '<button class="cell' + (m === t.monitor ? ' on' : '') + '">' + m + '</button>';
        });
        io += '</div>' + dropDown('Output', 'Sends Only') + '<div class="slot"></div>';
    } else {
        io = '<div class="slot"></div>';
    }
    if (t.no) {
        mix += '<button class="cell vol' + (t.off ? '' : ' on') + '">' + t.no + '</button><button class="cell">S</button><button class="cell rec' + (t.off ? ' half' : '') + '" aria-label="Arm"></button>';
        if (t.vol) mix += '<input class="cell level" aria-label="Volume" value="' + t.vol + '"><button class="cell pan">C</button>';
        if (t.dot || t.armed) mix += '<i class="auto-dot' + (t.armed ? ' second' : '') + '"></i>';
    }
    var meter = t.meter.map(function (m) {
        return '<i>' + (m ? '<b style="height:' + m + '%"></b>' : '') + '</i>';
    }).join('');
    return '<div class="track ' + t.type + '"><div class="lane">' + laneHtml(t) + '</div>' +
        '<div class="head ' + (t.tint || '') + '">' + head + '</div><div class="io">' + io + '</div>' +
        '<div class="mixer"><div class="mix-controls">' + mix + '</div><div class="meter">' + meter + '</div></div></div>';
}

document.getElementById('track_list').innerHTML = tracks.map(trackHtml).join('') +
    '<div class="track empty"><div class="lane">' + laneHtml({}) + '<div class="drop-hint">ファイルやデバイスをここへドロップ</div></div><div class="side"></div></div>';

document.getElementById('overlay').innerHTML = '<i class="playhead" style="left:' + at(playhead) + '"></i>' +
    '<i class="insert-mark top" style="left:' + at(insertMark) + '"></i><i class="insert-mark bottom" style="left:' + at(insertMark) + '"></i>';

// Rulers
var bars = '<i style="width:' + at(21) + '"></i>';
for (var bar = 21; bar <= 109; bar += 4) {
    bars += '<span style="width:' + pct(4) + '">' + bar + '</span>';
}
document.getElementById('bar_ruler').innerHTML = bars;

var times = '<i style="width:' + at(23.6) + '"></i>';
for (var s = 45; s <= 210; s += 15) {
    times += '<span style="width:' + pct(7.5625) + '">' + Math.floor(s / 60) + ':' + ('0' + s % 60).slice(-2) + '</span>';
}
document.getElementById('time_ruler').innerHTML = times;

// Overview: [x, y, width, height, colour]
var W = '#fff', B = '#47a2ec', G = '#8ff72e', N = '#99714a';
var blocks = [
    [0, 0, 749, 2, '#d8609a'], [0, 1, 765, 2, '#f0a32c'], [0, 3, 765, 2, '#f6f37a'], [0, 4, 326, 2, W], [457, 4, 88, 2, W], [545, 5, 7, 2, W],
    [283, 5, 30, 2, W], [161, 9, 15, 2, '#dc2f2f'], [151, 10, 17, 2, '#dd3dd3'], [173, 10, 32, 2, '#ddd'], [205, 9, 82, 2, W], [210, 11, 48, 2, W], [236, 12, 10, 2, W],
    [257, 11, 30, 2, B], [140, 13, 27, 2, '#bffb00'], [176, 13, 29, 2, '#e894a6'], [209, 13, 19, 2, W], [255, 13, 7, 2, N],
    [329, 6, 37, 2, B], [366, 6, 24, 2, '#ddd'], [396, 6, 24, 2, N], [334, 9, 34, 2, B], [329, 11, 20, 2, N], [421, 9, 35, 2, B],
    [474, 9, 30, 2, G], [474, 11, 4, 3, G], [484, 11, 20, 2, G], [500, 12, 32, 2, G], [526, 9, 18, 2, W], [545, 9, 7, 2, N], [545, 11, 7, 2, W], [536, 13, 16, 2, B],
    [566, 5, 5, 2, W], [610, 8, 54, 2, W], [668, 9, 10, 3, W], [678, 12, 18, 2, W], [694, 10, 24, 2, '#ddd'], [710, 9, 9, 2, W], [766, 14, 17, 2, '#b95bd0'], [286, 0, 1, 16, '#ccc']
];
document.getElementById('overview').innerHTML = blocks.map(function (r) {
    return '<rect x="' + (r[0] / 18.96).toFixed(2) + '%" y="' + r[1] + '" width="' + (r[2] / 18.96).toFixed(2) + '%" height="' + r[3] + '" fill="' + r[4] + '"/>';
}).join('');

// Surround speakers: [x, y, rotation, colour]
document.getElementById('speakers').innerHTML = [[37, 37, -45, '#ffdf00'], [179, 37, 45, '#f29110'], [37, 179, -135, '#ffdf00'], [179, 179, 135, '#f29110']].map(function (s, i) {
    var turn = i < 2 ? s[2] : s[2] + 180;
    return '<g transform="translate(' + s[0] + ' ' + s[1] + ')"><path transform="rotate(' + s[2] + ')" fill="' + s[3] + '" d="M-7-8H7V5L11 11H-11L-7 5z"/>' +
        '<text transform="rotate(' + turn + ')" y="4">' + (i + 1) + '</text></g>';
}).join('');

// Speaker outputs
document.getElementById('outs').innerHTML = [['1/2', '1', 61, 65], ['3/4', '2', 56, 60], ['5/6', '1', 0, 0], ['7/8', '2', 0, 0]].map(function (o) {
    return '<div><div class="out-meter"><i><b style="height:' + o[2] + '%"></b></i><i><b style="height:' + o[3] + '%"></b></i></div>' + o[0] +
        '<span class="select amber"><select aria-label="Output ' + o[0] + '"><option>Ext. Out</option></select></span>' +
        '<span class="select amber"><select aria-label="Channel ' + o[0] + '"><option>' + o[1] + '</option></select></span></div>';
}).join('');

document.getElementById('chain_in').innerHTML = document.getElementById('chain_out').innerHTML = '<i></i><i></i>';
```
